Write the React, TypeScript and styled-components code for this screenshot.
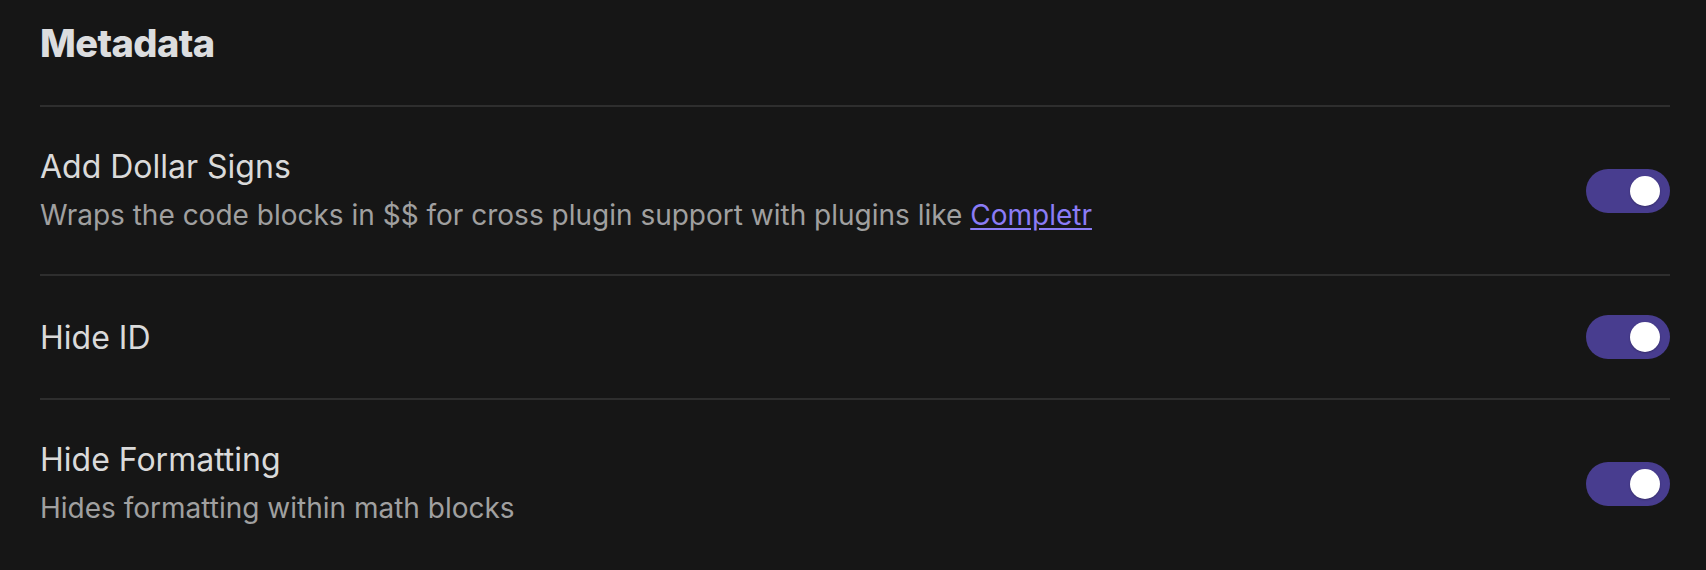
import { useState } from "react";
import styled, { createGlobalStyle } from "styled-components";

const GlobalStyle = createGlobalStyle`
  html, body {
    margin: 0;
    padding: 0;
    background: #161616;
  }
  body {
    font-family: Inter, "Noto Sans", sans-serif;
    -webkit-font-smoothing: antialiased;
  }
`;

const Page = styled.div`
  padding: 0 36px 0 40px;
  min-height: 570px;
  box-sizing: border-box;
  background: #161616;
`;

const Heading = styled.h2`
  margin: 0;
  padding: 20px 0 39px;
  font-size: 38px;
  line-height: 46px;
  font-weight: 800;
  color: #dcdddf;
  letter-spacing: -0.6px;
`;

const Row = styled.div`
  display: flex;
  align-items: center;
  justify-content: space-between;
  gap: 40px;
  padding: 39px 0;
  border-top: 2px solid #2e2e2e;
`;

const Info = styled.div`
  display: flex;
  flex-direction: column;
  gap: 9px;
`;

const Name = styled.div`
  font-size: 32px;
  line-height: 41px;
  color: #dadada;
`;

const Description = styled.div`
  font-size: 28px;
  line-height: 39px;
  color: #a0a0a0;

  a {
    color: #8b7cf6;
    text-decoration: underline;
    text-underline-offset: 3px;
  }
`;

const Track = styled.button<{ $on: boolean }>`
  flex: none;
  position: relative;
  width: 84px;
  height: 44px;
  padding: 0;
  border: none;
  border-radius: 22px;
  cursor: pointer;
  background: ${(p) => (p.$on ? "#483d8f" : "#3a3a3a")};
`;

const Knob = styled.span<{ $on: boolean }>`
  position: absolute;
  top: 7px;
  left: ${(p) => (p.$on ? "44px" : "10px")};
  width: 30px;
  height: 30px;
  border-radius: 50%;
  background: #ffffff;
  box-shadow: 0 1px 2px rgba(0, 0, 0, 0.25);
  transition: left 0.15s ease;
`;

type ToggleProps = { initial?: boolean };

const Toggle = ({ initial = true }: ToggleProps) => {
  const [on, setOn] = useState(initial);
  return (
    <Track $on={on} onClick={() => setOn(!on)} aria-pressed={on}>
      <Knob $on={on} />
    </Track>
  );
};

const settings = [
  {
    name: "Add Dollar Signs",
    desc: (
      <>
        Wraps the code blocks in $$ for cross plugin support with plugins like{" "}
        <a href="#">Completr</a>
      </>
    ),
  },
  { name: "Hide ID", desc: null },
  { name: "Hide Formatting", desc: "Hides formatting within math blocks" },
];

export default function App() {
  return (
    <>
      <GlobalStyle />
      <Page>
        <Heading>Metadata</Heading>
        {settings.map((s) => (
          <Row key={s.name}>
            <Info>
              <Name>{s.name}</Name>
              {s.desc && <Description>{s.desc}</Description>}
            </Info>
            <Toggle />
          </Row>
        ))}
      </Page>
    </>
  );
}
